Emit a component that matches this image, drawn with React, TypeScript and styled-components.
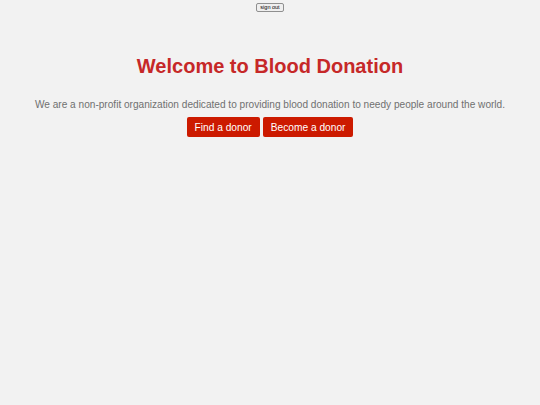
import styled, { createGlobalStyle } from 'styled-components';

const GlobalStyle = createGlobalStyle`
    html, body {
        margin: 0;
        padding: 0;
        background: #f2f2f2;
        font-family: 'Liberation Sans', Arial, sans-serif;
    }
`;

const Page = styled.div`
    min-height: 405px;
    display: flex;
    flex-direction: column;
    align-items: center;
    padding-top: 3px;
    box-sizing: border-box;
`;

const SignOut = styled.button`
    font-family: 'Liberation Sans', Arial, sans-serif;
    font-size: 5.5px;
    line-height: 7px;
    padding: 0 3px;
    height: 9px;
    color: #000;
    background: #efefef;
    border: 1px solid #8f8f8f;
    border-radius: 2px;
    cursor: pointer;
`;

const Hero = styled.section`
    display: flex;
    flex-direction: column;
    align-items: center;
    margin-top: 42px;
    text-align: center;
`;

const Title = styled.h1`
    margin: 0;
    font-size: 20px;
    line-height: 24px;
    font-weight: 700;
    color: #c62828;
`;

const Description = styled.p`
    margin: 20px 0 0;
    font-size: 10.1px;
    line-height: 14px;
    color: #707070;
`;

const Actions = styled.div`
    display: flex;
    gap: 3px;
    margin-top: 5px;
`;

const ActionButton = styled.button`
    font-family: 'Liberation Sans', Arial, sans-serif;
    font-size: 10.2px;
    height: 20px;
    padding: 0 8px;
    color: #fff;
    background: #cc1a00;
    border: none;
    border-radius: 2px;
    cursor: pointer;
`;

export default function App() {
    return (
        <>
            <GlobalStyle />
            <Page>
                <SignOut>sign out</SignOut>
                <Hero>
                    <Title>Welcome to Blood Donation</Title>
                    <Description>
                        We are a non-profit organization dedicated to providing blood donation to needy people around the world.
                    </Description>
                    <Actions>
                        <ActionButton>Find a donor</ActionButton>
                        <ActionButton>Become a donor</ActionButton>
                    </Actions>
                </Hero>
            </Page>
        </>
    );
}
